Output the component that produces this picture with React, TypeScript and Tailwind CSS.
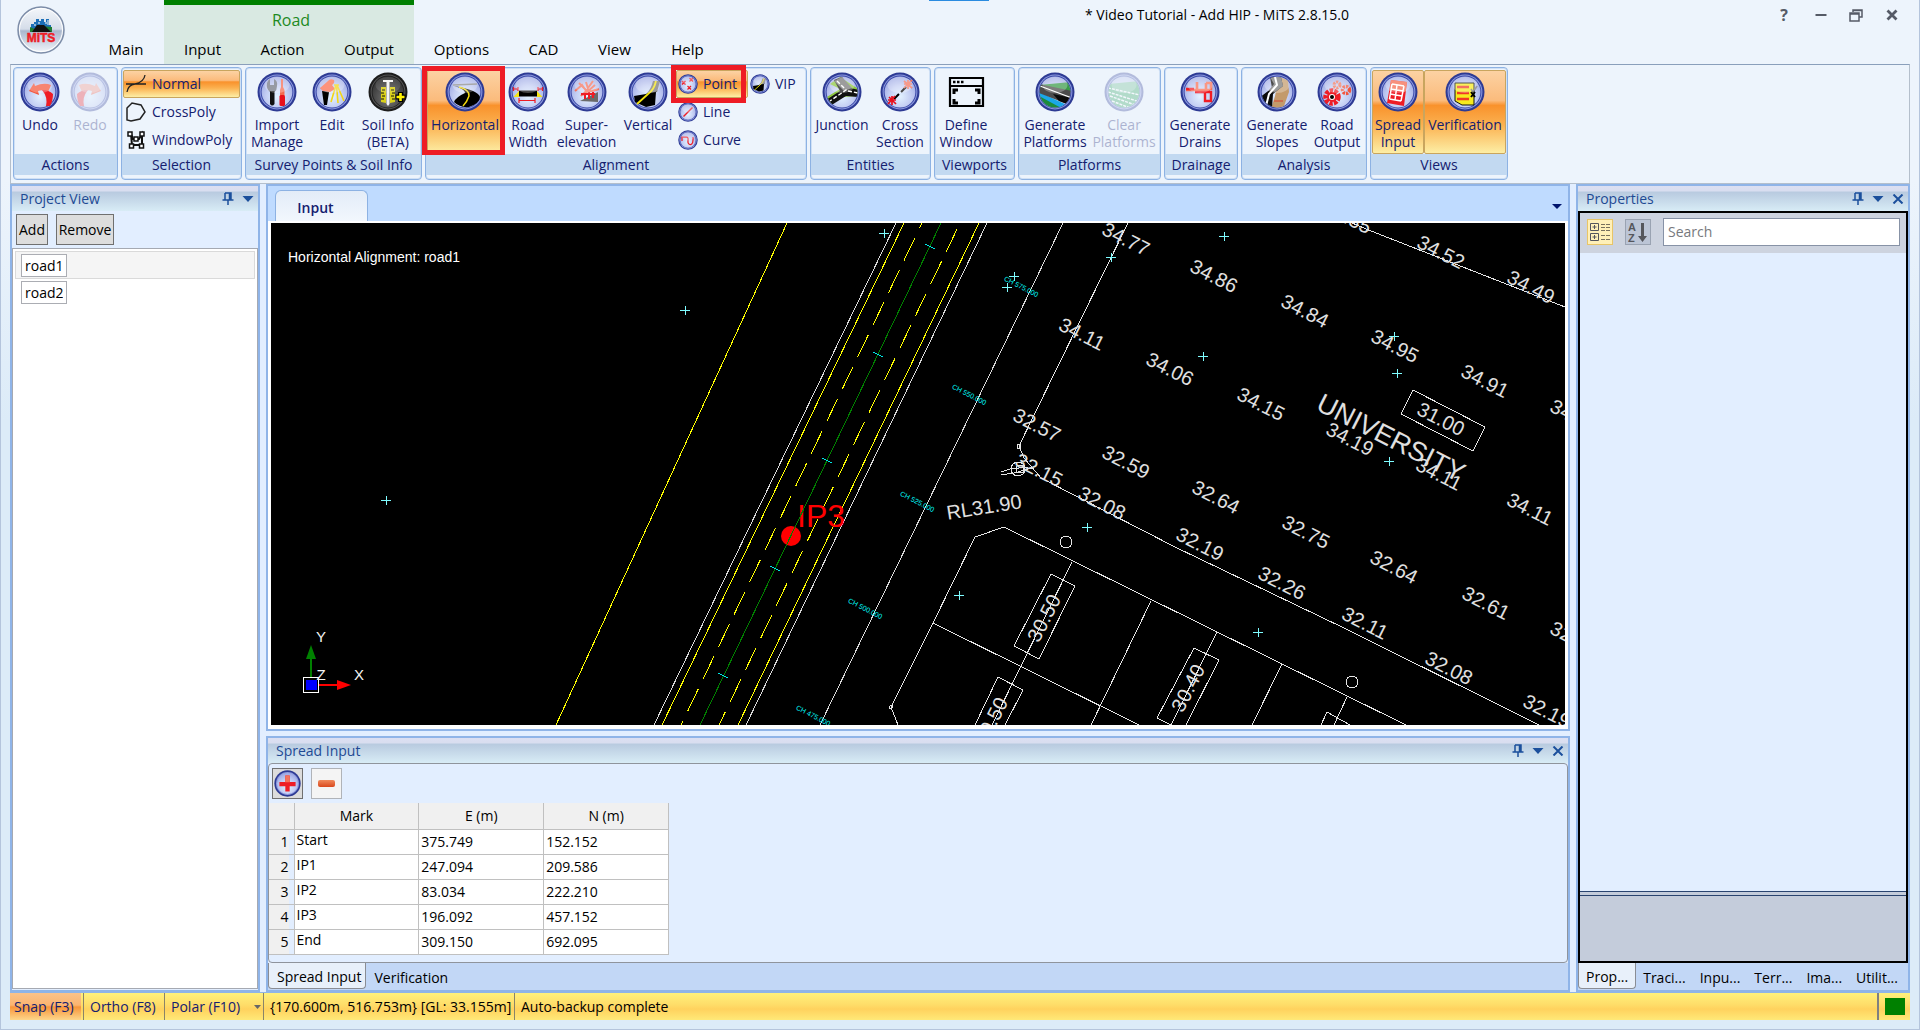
import { useState } from 'react'
import type { ReactNode } from 'react'
import clsx from 'clsx'

/* ---------- ribbon icons ---------- */

function Orb({ children, size = 40, dark = false }: { children?: ReactNode; size?: number; dark?: boolean }) {
  return (
    <svg width={size} height={size} viewBox="0 0 40 40" className="shrink-0" aria-hidden="true">
      <circle cx="20" cy="20" r="19.5" fill={dark ? '#1c1c1c' : '#2d3a94'} />
      <circle cx="20" cy="20" r="17.4" fill={dark ? '#555' : '#8e9be0'} />
      <circle cx="20" cy="20" r="16.4" fill={dark ? '#222' : '#3a48a6'} />
      <circle cx="20" cy="20" r="15.4" fill={dark ? 'url(#orbDark)' : 'url(#orbBlue)'} />
      {children}
      <ellipse cx="20" cy="13" rx="12.5" ry="8" fill="#fff" opacity={dark ? 0.12 : 0.28} />
    </svg>
  )
}

function IconDefs() {
  return (
    <svg width="0" height="0" className="absolute" aria-hidden="true">
      <defs>
        <radialGradient id="orbBlue" cx="50%" cy="65%" r="60%">
          <stop offset="0" stopColor="#e3f2ff" />
          <stop offset="0.6" stopColor="#c3cdf3" />
          <stop offset="1" stopColor="#a3aee6" />
        </radialGradient>
        <radialGradient id="orbDark" cx="50%" cy="70%" r="65%">
          <stop offset="0" stopColor="#777" />
          <stop offset="1" stopColor="#333" />
        </radialGradient>
        <linearGradient id="logoBg" x1="0" y1="0" x2="0" y2="1">
          <stop offset="0" stopColor="#f4f7fb" />
          <stop offset="0.48" stopColor="#d5dde9" />
          <stop offset="0.52" stopColor="#a9b7cd" />
          <stop offset="1" stopColor="#f2f6fb" />
        </linearGradient>
        <clipPath id="orbClip">
          <circle cx="20" cy="20" r="15.4" />
        </clipPath>
      </defs>
    </svg>
  )
}

const UndoIcon = () => (
  <Orb>
    <path d="M9 19 L14 11 L15 14 Q24 10 31 13 Q29 18 28 20 Q23 17 18 19 L19 23 Z" fill="#f4563c" />
    <path d="M22 18 Q29 18 33 22 Q33 29 30 34 L26 34 Q28 25 22 18 Z" fill="#ee1c25" />
  </Orb>
)
const RedoIcon = () => (
  <Orb>
    <path d="M31 19 L26 11 L25 14 Q16 10 9 13 Q11 18 12 20 Q17 17 22 19 L21 23 Z" fill="#f4563c" />
    <path d="M18 18 Q11 18 7 22 Q7 29 10 34 L14 34 Q12 25 18 18 Z" fill="#ee1c25" />
  </Orb>
)
const ImportIcon = () => (
  <Orb>
    <path d="M13 20 Q9 17 10 11 Q11 8 13 7 V13 H17 V7 Q21 9 20 14 Q20 18 17.5 20 Z" fill="#6f7480" />
    <path d="M13 19 H17.5 V32 Q15.200 35 13 32 Z" fill="#111" />
    <path d="M24 7 H26 V15 L27.500 18 V24 H23 V18 L24 15 Z" fill="#f46a50" />
    <rect x="22.500" y="23" width="5.500" height="11" rx="1.500" fill="#e8101c" />
  </Orb>
)
const EditIcon = () => (
  <Orb>
    <path d="M8 16 L16 9 Q18 6 22 8 Q23 11 20 13 L23 17 L18 20 L11 19 Z" fill="#fb6a4c" />
    <path d="M10 19 L17 20 L15 33 L12 33 Z" fill="#000" />
    <path d="M24 13 L19 30 M25 13 L32 29 M24.500 13 L26 31 M22 13 H27" stroke="#f2d516" strokeWidth="1.600" fill="none" />
  </Orb>
)
const SoilIcon = () => (
  <Orb dark>
    <path d="M13 15 H18 V31 L13 30 Z M22 15 H27 V30 L22 31 Z" fill="#d9cf1a" />
    <path d="M14 18 h3 M13 21 h3 M14 24 h3 M13 27 h3 M23 18 h3 M24 21 h3 M23 24 h3 M24 27 h3" stroke="#111" strokeWidth="1" />
    <path d="M15 8 H25 V10 H21.500 V32 L20 34 L18.500 32 V10 H15 Z" fill="#f4f4f4" />
    <path d="M32.500 20 V30 M27.500 25 H37.500" stroke="#000" strokeWidth="5" />
    <path d="M32.500 21 V29 M28.500 25 H36.500" stroke="#fff200" strokeWidth="2.600" />
  </Orb>
)
const HorizontalIcon = () => (
  <Orb>
    <path d="M9 14 Q20 17 20 21 Q11 25 9 30 Q15 36 24 35 Q35 31 35 25 Q33 18 9 14 Z" fill="#000" />
    <path d="M8 13 L32 12" stroke="#888" strokeWidth="1.500" />
    <path d="M14 15 Q25 18 24 24 Q22 30 18 34" stroke="#f3d90f" strokeWidth="1.500" fill="none" />
  </Orb>
)
const RoadWidthIcon = () => (
  <Orb>
    <path d="M11 18.500 H29 V24.500 H11 Z" fill="#000" />
    <path d="M5.500 25 L11 19 V25 Z M34.500 25 L29 19 V25 Z" fill="#f5e316" />
    <path d="M5.500 15 V19 M10 15 V19 M5.500 17 H10 M30 15 V19 M34.500 15 V19 M30 17 H34.500 M11 26 V31 M27 26 V31 M11 28.500 H27" stroke="#ee1c25" strokeWidth="1.200" fill="none" />
  </Orb>
)
const SuperIcon = () => (
  <Orb>
    <path d="M13 29 L31 20 V30 Z" fill="#6a6a6a" />
    <path d="M8 19 L15 13 L20 20 L28 13 M12 11 L19 18 M14 24 Q18 19 25 19 L32 17 M19 10 L22 20 M26 9 L16 23" stroke="#f4725c" strokeWidth="2" fill="none" />
    <path d="M18 21 V27 M22 20 V27 M26 20 V26 M14 22 H28" stroke="#ee1c25" strokeWidth="2" fill="none" />
  </Orb>
)
const VerticalIcon = ({ size = 40 }: { size?: number }) => (
  <Orb size={size}>
    <path d="M28 12 L31 9 L28 20 L27 33 L18 35 L7 30 L6 24 L18 22 Q25 18 28 12 Z" fill="#000" />
    <path d="M25 9 L32 9 L29 20 L19 21 Q23 17 25 9 Z" fill="#777" />
    <path d="M28 9 Q26 18 20 22 L9 32" stroke="#f3e30f" strokeWidth="1.800" fill="none" />
  </Orb>
)
const PointIcon = () => (
  <Orb size={20}>
    <path d="M8 14 l7 7 m0 -7 l-7 7 M23 8 l7 7 m0 -7 l-7 7 M19 24 l7 7 m0 -7 l-7 7" stroke="#ee1c25" strokeWidth="2.500" />
  </Orb>
)
const LineIcon = () => (
  <Orb size={20}>
    <path d="M11 29 L29 11" stroke="#ee1c25" strokeWidth="3" />
  </Orb>
)
const CurveIcon = () => (
  <Orb size={20}>
    <path d="M8 22 V14 H17 Q21 14 20 21 Q19 29 25 29 Q31 29 30 14" stroke="#ee1c25" strokeWidth="2.500" fill="none" />
  </Orb>
)
const JunctionIcon = () => (
  <Orb>
    <g clipPath="url(#orbClip)">
      <path d="M3 26 L18 17 L8 12 L18 5 L38 18 L36 24 L20 25 L5 36 Z" fill="#8cc63e" />
      <path d="M12 8 L20 5 L28 16 L37 18 L37 25 L24 24 L8 34 L4 28 L18 19 Z" fill="#111" />
      <path d="M12 9 L20 5 L30 16 L22 19 Z" fill="#777" />
      <path d="M15 9 L24 18 L8 29 M26 19 L36 21" stroke="#fff" strokeWidth="1.400" strokeDasharray="4 2" fill="none" />
    </g>
  </Orb>
)
const CrossSectionIcon = () => (
  <Orb>
    <path d="M14 27 L28 13" stroke="#000" strokeWidth="2" strokeDasharray="7 3" />
    <path d="M9 25 L16 32 M8 28 L16 28 M12 33 L12 24 M15 24 L8 32" stroke="#e8101c" strokeWidth="1.700" />
    <path d="M24 9 L32 16 M24 12 L32 12 M28 17 L28 8 M32 8 L24 16" stroke="#f4725c" strokeWidth="1.700" />
  </Orb>
)
const WindowIcon = () => (
  <svg width="40" height="40" viewBox="0 0 40 40" aria-hidden="true">
    <path d="M4 6 H37 V34 H4 Z M4 14 H37" fill="none" stroke="#000" strokeWidth="2.200" />
    <path d="M7 10 h2.500 M11 10 h2.500 M15 10 h2.500" stroke="#000" strokeWidth="2.500" />
    <path d="M8 22 V18 H12 M29 18 H33 V22 M8 27 V31 H12 M29 31 H33 V27" fill="none" stroke="#000" strokeWidth="3" />
  </svg>
)
const PlatformsIcon = () => (
  <Orb>
    <g clipPath="url(#orbClip)">
      <path d="M4 13 L36 10 V20 L4 16 Z" fill="#3a9a48" />
      <path d="M4 22 L30 37 H4 Z" fill="#1d8a3c" />
      <path d="M4 20 L34 34 L30 38 L4 24 Z" fill="#1aa7e8" />
      <path d="M4 12 L37 19 V34 L4 21 Z" fill="#4b4b4b" />
      <path d="M18 22 L37 26 V34 L24 29 Z" fill="#0a0a0a" />
      <path d="M5 14 L37 26" stroke="#fff" strokeWidth="1.300" />
    </g>
  </Orb>
)
const ClearIcon = () => (
  <Orb>
    <g clipPath="url(#orbClip)">
      <path d="M4 12 L36 9 V37 H4 Z" fill="#2da35a" />
      <path d="M4 16 L36 23 M4 20 L36 30 M6 24 L34 34 M8 29 L26 36" stroke="#fff" strokeWidth="1.500" strokeDasharray="3 1" />
    </g>
  </Orb>
)
const DrainsIcon = () => (
  <Orb>
    <path d="M6 18 H30 M17 10 V18 M26 11 H31 V18 M26 18 V11" stroke="#f86f55" strokeWidth="2.600" fill="none" />
    <path d="M15 20 H31 V29 H25 V20 M6 17 H14" stroke="#f01c25" strokeWidth="2.400" fill="none" />
  </Orb>
)
const SlopesIcon = () => (
  <Orb>
    <g clipPath="url(#orbClip)">
      <path d="M22 5 L31 8 L32 20 L26 37 H14 L18 24 Z" fill="#c39a6b" />
      <path d="M13 5 H24 L26 14 L16 22 L15 36 H2 V26 L15 16 Z" fill="#0a0a0a" />
      <path d="M13 5 H24 L26 14 L18 20 L12 18 L17 12 Z" fill="#777" />
      <path d="M18 5 L20 13 L12 22 L9 34" stroke="#fff" strokeWidth="2" fill="none" />
      <path d="M17 29 H26" stroke="#d84030" strokeWidth="1" />
    </g>
  </Orb>
)
const GearsIcon = () => (
  <Orb>
    <circle cx="15" cy="25" r="6.500" fill="none" stroke="#ee1c25" strokeWidth="4.500" strokeDasharray="3.400 1.200" />
    <circle cx="15" cy="25" r="4" fill="#fff" stroke="#ee1c25" strokeWidth="2" />
    <circle cx="15" cy="25" r="2" fill="#000" />
    <circle cx="29" cy="18" r="3.500" fill="none" stroke="#f2553c" strokeWidth="3.500" strokeDasharray="2.200 1" />
    <circle cx="20" cy="13" r="3" fill="none" stroke="#f2765c" strokeWidth="3" strokeDasharray="2.200 1" />
  </Orb>
)
const SpreadIcon = () => (
  <Orb>
    <path d="M13 8 L29 10 L26 34 L9 31 Z" fill="#ee1c25" />
    <path d="M13 8 L29 10 L27.500 20 L11.500 18 Z" fill="#f4674c" />
    <path d="M14 12 L26 14 M13 17 L25 19 M12 22 L24 24 M11.500 27 L23 29 M14 12 L11.500 27 M19 13 L17 28 M26 14 L23 29" stroke="#fff" strokeWidth="1.500" fill="none" />
  </Orb>
)
const VerifyIcon = () => (
  <Orb>
    <path d="M10 11 H29 V33 H17 L10 29 Z" fill="#f7ea1e" stroke="#111" strokeWidth="1" />
    <path d="M12 15 H24 M12 21 H24 M12 27 H24" stroke="#f03a22" strokeWidth="2.600" />
    <path d="M26 17 L28 20 L32 14" stroke="#777" strokeWidth="1.500" fill="none" />
    <path d="M26 20 L30 25 M30 20 L26 25" stroke="#000" strokeWidth="2" />
  </Orb>
)

function Logo() {
  return (
    <svg width="48" height="48" viewBox="0 0 48 48" aria-hidden="true">
      <circle cx="24" cy="24" r="23" fill="url(#logoBg)" stroke="#7d8da8" strokeWidth="1.500" />
      <circle cx="24" cy="24" r="21.500" fill="none" stroke="#fff" strokeWidth="1" />
      <path d="M14 18 h3 v-2 h2 v-3 h3 v2 h2 v-2 h3 v3 h2 v-3 h3 v6 h2 v4 H14 Z" fill="#1c6fb8" />
      <path d="M17 19 h2 M21 17 h2 M28 17 h2 M31 14 v5" stroke="#fff" strokeWidth="1" />
      <path d="M13 21 L18 23 L23 20 L35 21 V26 H13 Z" fill="#1d7c35" />
      <path d="M20 19 L27 19 L34 26 H15 Z" fill="#111" />
      <text x="24" y="36" textAnchor="middle" fontSize="12" fontWeight="700" fill="#ee1c25" stroke="#ee1c25" strokeWidth="0.500" className="font-['Liberation_Sans',sans-serif]">MiTS</text>
    </svg>
  )
}

/* ---------- ribbon ---------- */

const hot = 'border border-[#c9a55e] bg-[linear-gradient(#fcd2a3_0%,#fbbb7c_36%,#f9922c_42%,#fbb04f_65%,#fdeea5_100%)]'

function BigButton({ icon, label, width, active, disabled }: { icon: ReactNode; label: string; width: string; active?: boolean; disabled?: boolean }) {
  return (
    <button
      type="button"
      disabled={disabled}
      className={clsx('flex h-[84px] shrink-0 flex-col items-center rounded-xs text-center leading-[17px] whitespace-pre', width, active ? hot + ' pt-px' : 'pt-0.5', disabled && 'opacity-30')}
    >
      {icon}
      <span className="mt-1">{label}</span>
    </button>
  )
}

function SmallButton({ icon, label, active, width }: { icon: ReactNode; label: string; active?: boolean; width?: string }) {
  return (
    <button type="button" className={clsx('flex h-7 items-center gap-[5px] rounded-xs text-left', width, active ? hot + ' pl-px' : 'pl-0.5')}>
      {icon}
      <span>{label}</span>
    </button>
  )
}

function Group({ title, width, children }: { title: string; width: string; children: ReactNode }) {
  return (
    <section aria-label={title} className={clsx('flex h-[113px] shrink-0 flex-col rounded-sm border border-[#8db2e3] shadow-[inset_0_0_0_1px_#cfe0f5]', width)}>
      <div className="relative flex h-[86px] px-px pt-0.5">{children}</div>
      <h2 className="h-[21px] bg-[#c2d9f1] text-center leading-[21px] whitespace-nowrap">{title}</h2>
    </section>
  )
}

function Ribbon() {
  return (
    <div className="mx-[9px] flex h-[120px] shrink-0 items-start gap-[3px] overflow-hidden border border-[#b4bfcc] border-t-[#8a9fbb] bg-[#edf4fc] pt-0.5 pl-0.5 text-[#14206f]">
      <Group title="Actions" width="w-[105px]">
        <BigButton icon={<UndoIcon />} label="Undo" width="w-[50px]" />
        <BigButton icon={<RedoIcon />} label="Redo" width="w-[50px]" disabled />
      </Group>
      <Group title="Selection" width="w-[121px]">
        <div className="flex w-full flex-col">
          <SmallButton active label="Normal" icon={
            <svg width="22" height="20" viewBox="0 0 22 20" aria-hidden="true"><path d="M2 18 Q3 11 10 10 Q19 8 20 1 M1 10 H21" fill="none" stroke="#222" strokeWidth="1.300" /></svg>
          } />
          <SmallButton label="CrossPoly" icon={
            <svg width="22" height="20" viewBox="0 0 22 20" aria-hidden="true"><path d="M2 18 V6 L7 1 L16 3 L20 10 L15 17 L6 19 Z" fill="none" stroke="#222" strokeWidth="1.500" /></svg>
          } />
          <SmallButton label="WindowPoly" icon={
            <svg width="22" height="20" viewBox="0 0 22 20" aria-hidden="true">
              <path d="M6 4 L8 9 L14 9 L17 4 L17 15 H7 Z" fill="none" stroke="#111" strokeWidth="2" />
              <path d="M3 2 h4 v4 h-4 z M15 2 h4 v4 h-4 z M9 7 h4 v4 h-4 z M4.500 14 h4 v4 h-4 z M14.500 14 h4 v4 h-4 z" fill="#fff" stroke="#111" strokeWidth="1.500" />
            </svg>
          } />
        </div>
      </Group>
      <Group title="Survey Points & Soil Info" width="w-[177px]">
        <BigButton icon={<ImportIcon />} label={'Import\nManage'} width="w-[60px]" />
        <BigButton icon={<EditIcon />} label="Edit" width="w-[50px]" />
        <BigButton icon={<SoilIcon />} label={'Soil Info\n(BETA)'} width="w-[62px]" />
      </Group>
      <Group title="Alignment" width="w-[382px]">
        <BigButton icon={<HorizontalIcon />} label="Horizontal" width="w-[76px]" active />
        <BigButton icon={<RoadWidthIcon />} label={'Road\nWidth'} width="w-[50px]" />
        <BigButton icon={<SuperIcon />} label={'Super-\nelevation'} width="w-[67px]" />
        <BigButton icon={<VerticalIcon />} label="Vertical" width="w-14" />
        <div className="flex flex-col">
          <SmallButton icon={<PointIcon />} label="Point" active width="w-[72px]" />
          <SmallButton icon={<LineIcon />} label="Line" />
          <SmallButton icon={<CurveIcon />} label="Curve" />
        </div>
        <div>
          <SmallButton icon={<VerticalIcon size={20} />} label="VIP" />
        </div>
        <div className="pointer-events-none absolute -top-0.5 -left-1 h-[89px] w-[83px] border-[5px] border-[#ee1c25]" />
        <div className="pointer-events-none absolute -top-[3px] left-[245px] h-[38px] w-[75px] border-[5px] border-[#ee1c25]" />
      </Group>
      <Group title="Entities" width="w-[121px]">
        <BigButton icon={<JunctionIcon />} label="Junction" width="w-[60px]" />
        <BigButton icon={<CrossSectionIcon />} label={'Cross\nSection'} width="w-[56px]" />
      </Group>
      <Group title="Viewports" width="w-[81px]">
        <BigButton icon={<WindowIcon />} label={'Define\nWindow'} width="w-[60px]" />
      </Group>
      <Group title="Platforms" width="w-[143px]">
        <BigButton icon={<PlatformsIcon />} label={'Generate\nPlatforms'} width="w-[70px]" />
        <BigButton icon={<ClearIcon />} label={'Clear\nPlatforms'} width="w-[68px]" disabled />
      </Group>
      <Group title="Drainage" width="w-[74px]">
        <BigButton icon={<DrainsIcon />} label={'Generate\nDrains'} width="w-[68px]" />
      </Group>
      <Group title="Analysis" width="w-[126px]">
        <BigButton icon={<SlopesIcon />} label={'Generate\nSlopes'} width="w-[68px]" />
        <BigButton icon={<GearsIcon />} label={'Road\nOutput'} width="w-[52px]" />
      </Group>
      <Group title="Views" width="w-[138px]">
        <BigButton icon={<SpreadIcon />} label={'Spread\nInput'} width="w-[52px]" active />
        <BigButton icon={<VerifyIcon />} label="Verification" width="w-[82px]" active />
      </Group>
    </div>
  )
}

/* ---------- title bar ---------- */

const tabs = [
  { name: 'Main', width: 'w-[76px]', road: false },
  { name: 'Input', width: 'w-[77px]', road: true },
  { name: 'Action', width: 'w-[83px]', road: true },
  { name: 'Output', width: 'w-[90px]', road: true },
  { name: 'Options', width: 'w-[95px]', road: false },
  { name: 'CAD', width: 'w-[69px]', road: false },
  { name: 'View', width: 'w-[73px]', road: false },
  { name: 'Help', width: 'w-[73px]', road: false },
]

function Tab({ name, width }: { name: string; width: string }) {
  return <button type="button" className={clsx('h-7 pb-0.5 text-center text-black', width)}>{name}</button>
}

function TitleBar() {
  return (
    <header className="relative flex h-16 shrink-0 text-[15px]">
      <div className="w-[87px] pt-1.5 pl-4"><Logo /></div>
      <nav className="flex items-end" aria-label="Ribbon tabs">
        <Tab name="Main" width="w-[76px]" />
        <div className="flex h-16 flex-col justify-between border-t-[5px] border-[#008000] bg-[#d9e9e2]">
          <div className="pt-[5px] pl-1 text-center text-[16px] text-[#1e8a1e]">Road</div>
          <div className="flex">
            {tabs.filter((t) => t.road).map((t) => <Tab key={t.name} name={t.name} width={t.width} />)}
          </div>
        </div>
        {tabs.slice(4).map((t) => <Tab key={t.name} name={t.name} width={t.width} />)}
      </nav>
      <div className="flex h-[30px] flex-1 items-center justify-between pr-[11px] pl-[361px]">
        <h1 className="text-[14px] whitespace-nowrap text-black">* Video Tutorial - Add HIP - MiTS 2.8.15.0</h1>
        <div className="flex text-[#555a66]">
          <button type="button" aria-label="Help" className="flex w-9 items-center justify-center text-[16px] font-bold">?</button>
          <button type="button" aria-label="Minimize" className="flex w-[38px] items-center justify-center">
            <svg width="12" height="12" viewBox="0 0 12 12"><path d="M0.500 6 H11.500" stroke="#555a66" strokeWidth="2" /></svg>
          </button>
          <button type="button" aria-label="Restore" className="flex w-8 items-center justify-center">
            <svg width="14" height="14" viewBox="0 0 14 14"><path d="M4 4 V2 H13 V9 H10 M1 5 H10 V13 H1 Z M1 6 H10 M4 2.500 H13" fill="none" stroke="#555a66" strokeWidth="1.500" /></svg>
          </button>
          <button type="button" aria-label="Close" className="flex w-9 items-center justify-center pl-1">
            <svg width="12" height="12" viewBox="0 0 12 12"><path d="M1.500 1.500 L10.500 10.500 M10.500 1.500 L1.500 10.500" stroke="#555a66" strokeWidth="2.800" /></svg>
          </button>
        </div>
      </div>
      <div className="absolute top-0 left-[928px] h-px w-[60px] bg-[#2a8be0]" />
    </header>
  )
}

/* ---------- docked panels ---------- */

function DockHeader({ title, closable }: { title: string; closable?: boolean }) {
  return (
    <div className="flex h-[25px] shrink-0 items-center justify-between bg-[linear-gradient(#dcdff2_0%,#d9def0_18%,#b9cbe0_26%,#d8ecf6_100%)] pr-1 pl-2">
      <h2 className="text-[#1e4a94]">{title}</h2>
      <div className="flex items-center gap-2">
        <button type="button" aria-label="Pin">
          <svg width="12" height="14" viewBox="0 0 12 14"><path d="M3 1 H9 V8 M3 1 V8 M7.500 1 V8 M0.500 8 H11.500 M6 8 V13" fill="none" stroke="#1b4f9c" strokeWidth="1.500" /></svg>
        </button>
        <button type="button" aria-label="Panel menu">
          <svg width="12" height="6" viewBox="0 0 12 6"><path d="M0.500 0 H11.500 L6 6 Z" fill="#1b4f9c" /></svg>
        </button>
        {closable && (
          <button type="button" aria-label="Close panel">
            <svg width="12" height="10" viewBox="0 0 12 10"><path d="M1.500 0.500 L10.500 9.500 M10.500 0.500 L1.500 9.500" stroke="#1b4f9c" strokeWidth="2" /></svg>
          </button>
        )}
      </div>
    </div>
  )
}

function DockTabs({ items, padding }: { items: string[]; padding: string }) {
  const [current, setCurrent] = useState(0)
  return (
    <div className="flex h-[27px] shrink-0 bg-[#c2d7f6]">
      {items.map((item, i) => (
        <button
          key={item}
          type="button"
          onClick={() => setCurrent(i)}
          className={clsx('h-[26px] shrink-0 pt-[3px] text-black', padding, i === current && 'rounded-b-sm border border-t-0 border-[#8a8d94] bg-[#e8f0fa]')}
        >
          {item}
        </button>
      ))}
    </div>
  )
}

function ProjectView() {
  return (
    <aside className="flex w-[250px] shrink-0 flex-col border-2 border-[#8fb4e8] bg-[#e2eeff]">
      <DockHeader title="Project View" />
      <div className="flex gap-2 px-1 py-[3px]">
        <button type="button" className="h-[31px] w-8 border border-[#707070] bg-[#dddddd] text-black">Add</button>
        <button type="button" className="h-[31px] w-[58px] border border-[#707070] bg-[#dddddd] text-black">Remove</button>
      </div>
      <ul className="mb-px flex-1 border border-[#a5a9b2] bg-white p-0.5 text-black">
        <li className="flex h-7 items-center border border-[#dadada] bg-[#f5f5f5] px-[5px]">
          <input aria-label="First road" defaultValue="road1" className="h-[23px] w-[46px] border border-[#abadb3] bg-white px-[3px]" />
        </li>
        <li className="flex h-[27px] items-center px-1.5">
          <input aria-label="Second road" defaultValue="road2" className="h-[23px] w-[46px] border border-[#abadb3] bg-white px-[3px]" />
        </li>
      </ul>
    </aside>
  )
}

/* ---------- drawing ---------- */

const levels: [string, number, number][] = [
  ['34.77', 1126, 239], ['34.86', 1214, 276], ['34.84', 1305, 311], ['34.11', 1082, 334],
  ['34.06', 1170, 369], ['34.15', 1261, 404], ['34.95', 1395, 346], ['34.91', 1485, 381],
  ['34.52', 1441, 252], ['34.49', 1531, 287], ['34.35', 1348, 217], ['34.88', 1574, 416],
  ['31.00', 1441, 419], ['34.19', 1350, 439], ['32.57', 1037, 425], ['32.15', 1039, 470],
  ['32.59', 1126, 462], ['34.11', 1439, 474], ['32.08', 1102, 503], ['32.64', 1216, 497],
  ['32.75', 1306, 532], ['32.19', 1200, 544], ['34.11', 1530, 509], ['32.64', 1394, 567],
  ['32.26', 1282, 583], ['32.61', 1486, 603], ['32.11', 1365, 623], ['32.58', 1574, 638],
  ['32.08', 1449, 668], ['32.19', 1547, 711],
]

const lotLevels: [string, number, number][] = [
  ['30.50', 1044, 618], ['30.40', 1188, 688], ['30.50', 991, 721],
]

const chainages: [string, number, number][] = [
  ['CH 575.000', 1021, 287], ['CH 550.000', 969, 395], ['CH 525.000', 917, 502],
  ['CH 500.000', 865, 609], ['CH 475.000', 813, 716],
]

const surveyPoints = [
  [1224, 236], [1111, 257], [1014, 276], [1007, 287], [1394, 336], [1203, 356], [1397, 373],
  [1389, 461], [1087, 527], [959, 595], [1258, 632], [884, 233], [685, 310], [386, 500],
]

const ticks = [[930, 246], [878, 354], [827, 460], [775, 568], [723, 675]]

function Drawing() {
  return (
    <svg viewBox="271 223 1294 502" preserveAspectRatio="xMinYMin slice" className="block h-full w-full bg-black font-['Liberation_Sans',Arial,sans-serif]" role="img" aria-label="Horizontal alignment drawing">
      <g fill="none" strokeWidth="1" shapeRendering="crispEdges">
        <path stroke="#ffff00" d="M787 223 L556 725 M904 223 L662 725 M979 223 L738 725" />
        <path stroke="#ffff00" strokeDasharray="25 10.700" strokeDashoffset="19" d="M922 223 L681 725" />
        <path stroke="#ffff00" strokeDasharray="25 10.700" strokeDashoffset="29" d="M960 223 L719 725" />
        <path stroke="#d8d8d8" d="M896 223 L654 725 M987 223 L746 725 M1063 223 L820 725" />
        {/* boundary and street edge */}
        <path stroke="#e4e4e4" d="M1128 223 L1035 413 L1019 446 L1024 458 L1041 478 L1175 547 L1344 628 L1539 725 M1350 222 L1366 229 L1565 307" />
        <path stroke="#e4e4e4" d="M898 725 L891 707 L933 623 L975 537 L1004 527 L1406 725 M933 623 L1139 725" />
        <path stroke="#e4e4e4" d="M1072 562 L992 725 M1151 601 L1091 725 M1217 632 L1171 725 M1282 664 L1252 725 M1347 697 L1334 725" />
        <path stroke="#e4e4e4" d="M1051 574 L1075 586 L1039 659 L1014 646 Z M1194 648 L1219 660 L1186 725 M1194 648 L1157 718 L1171 725 M975 725 L998 677 L1023 690 L1005 725 M1321 725 L1327 712 L1350 725" />
        <path stroke="#e4e4e4" d="M1413 390 L1485 427 L1473 451 L1401 414 Z" />
        <circle cx="1066" cy="542" r="6" stroke="#e4e4e4" />
        <circle cx="1352" cy="682" r="6" stroke="#e4e4e4" />
        <circle cx="1018" cy="469" r="7" stroke="#e4e4e4" />
        <circle cx="1020" cy="469" r="4" stroke="#e4e4e4" />
        <circle cx="891" cy="707" r="1.500" stroke="#e4e4e4" />
        <path stroke="#e4e4e4" d="M1017 444 h3 v4 h-3 Z M1001 472 L1010 469 L1028 467 M1001 475 L1014 473 L1032 468" />
        <g stroke="#7ffcff">
          {surveyPoints.map(([x, y]) => <path key={x} d={`M${x - 5} ${y + 0.5} H${x + 5} M${x + 0.5} ${y - 4} V${y + 5}`} />)}
        </g>
      </g>
      <g fill="#e0e0e0" fontSize="20" textAnchor="middle">
        {levels.map(([t, x, y], i) => <text key={i} transform={`translate(${x} ${y}) rotate(27)`} y="7">{t}</text>)}
        {lotLevels.map(([t, x, y], i) => <text key={i} transform={`translate(${x} ${y}) rotate(-63)`} y="7">{t}</text>)}
        <text transform="translate(1391 438) rotate(27)" y="9" fontSize="27">UNIVERSITY</text>
        <text transform="translate(984 507) rotate(-9)" y="7">RL31.90</text>
      </g>
      <g fill="#00ffff" fontSize="7" textAnchor="middle">
        {chainages.map(([t, x, y]) => <text key={t} transform={`translate(${x} ${y}) rotate(27)`} y="2">{t}</text>)}
      </g>
      <text x="797" y="527" fontSize="32" fill="#ff0000">IP3</text>
      <circle cx="791" cy="536" r="10" fill="#ff0000" />
      <g fill="none" strokeWidth="1" shapeRendering="crispEdges">
        <path stroke="#008000" d="M941 223 L700 725" />
        <g stroke="#00e5e5">
          {ticks.map(([x, y]) => <path key={x} d={`M${x - 5} ${y - 2} L${x + 5} ${y + 3}`} />)}
        </g>
      </g>
      {/* axis marker */}
      <path d="M311 680 V656" stroke="#008000" strokeWidth="2" />
      <path d="M306 659 L311 645 L316 659 Z" fill="#008000" />
      <path d="M318 685 H340" stroke="#ff0000" strokeWidth="2" />
      <path d="M337 680 L351 685 L337 690 Z" fill="#ff0000" />
      <rect x="303.500" y="677.500" width="15" height="15" fill="#000" stroke="#fff" />
      <rect x="306" y="680" width="11" height="10" fill="#0000ff" />
      <g fill="#f4f4f4" fontSize="15" textAnchor="middle">
        <text x="321" y="642">Y</text>
        <text x="359" y="680">X</text>
        <text x="321" y="680">Z</text>
      </g>
      <text x="288" y="262" fontSize="14" fill="#fff">Horizontal Alignment: road1</text>
    </svg>
  )
}

function DrawingPanel() {
  return (
    <section className="flex min-h-0 flex-1 flex-col border-2 border-[#8fb4e8] bg-[#bfdbff]">
      <div className="flex h-[35px] shrink-0 items-end justify-between pr-1.5 pl-[7px]">
        <button type="button" className="h-[31px] w-[93px] rounded-t-md border border-b-0 border-[#8db2e3] bg-[linear-gradient(#e3ecf8,#f2f7fd)] pt-1 pr-3 font-semibold text-[#14206f]">Input</button>
        <button type="button" aria-label="Open documents" className="pb-3">
          <svg width="10" height="5" viewBox="0 0 10 5"><path d="M0 0 H10 L5 5 Z" fill="#00156e" /></svg>
        </button>
      </div>
      <div className="min-h-0 flex-1 border-[3px] border-t-2 border-b-4 border-white">
        <Drawing />
      </div>
    </section>
  )
}

/* ---------- spread input ---------- */

const rows = [
  ['Start', '375.749', '152.152'],
  ['IP1', '247.094', '209.586'],
  ['IP2', '83.034', '222.210'],
  ['IP3', '196.092', '457.152'],
  ['End', '309.150', '692.095'],
]

function SpreadInput() {
  return (
    <section className="flex h-64 shrink-0 flex-col border-2 border-[#8fb4e8] bg-[#e2eeff]">
      <DockHeader title="Spread Input" closable />
      <div className="min-h-0 flex-1 overflow-hidden rounded-sm border border-[#8f949c]">
        <div className="flex gap-2 px-[3px] pt-1">
          <button type="button" aria-label="Add row" className="flex size-[31px] items-center justify-center border border-[#707070] bg-[#dcdcdc]">
            <svg width="27" height="27" viewBox="0 0 40 40">
              <circle cx="20" cy="20" r="19.500" fill="#2d3a94" />
              <circle cx="20" cy="20" r="17" fill="#8e9be0" />
              <circle cx="20" cy="20" r="15.500" fill="url(#orbBlue)" />
              <path d="M20 8 V32 M8 21 H32" stroke="#ee1c25" strokeWidth="6.500" />
              <path d="M20 8 V18" stroke="#f4725c" strokeWidth="6.500" />
            </svg>
          </button>
          <button type="button" aria-label="Remove row" className="flex size-[31px] items-center justify-center border border-[#b0b3b8] bg-[#f4f4f4]">
            <span className="h-[7px] w-[17px] rounded-xs bg-[linear-gradient(#f08a5c,#d9481c)]" />
          </button>
        </div>
        <table className="mt-1 w-[400px] table-fixed border-collapse text-black">
          <thead>
            <tr className="h-[26px] bg-[#f0f0f0]">
              <th className="w-[25px] border-r border-b border-[#c0c0c0]" aria-label="Row" />
              {['Mark', 'E (m)', 'N (m)'].map((h) => <th key={h} scope="col" className="border-r border-b border-[#c0c0c0] p-0 font-normal">{h}</th>)}
            </tr>
          </thead>
          <tbody>
            {rows.map((r, i) => (
              <tr key={r[0]} className="h-[25px] bg-white leading-[20px]">
                <th scope="row" className="border-r border-b border-[#c0c0c0] bg-[linear-gradient(to_right,#f0f0f0_20px,#e2eeff_20px)] p-0 pr-[5px] text-right font-normal">{i + 1}</th>
                <td className="border-r border-b border-[#c0c0c0] p-0 pl-0.5 align-top">{r[0]}</td>
                <td className="border-r border-b border-[#c0c0c0] p-0 pl-0.5">{r[1]}</td>
                <td className="border-r border-b border-[#c0c0c0] p-0 pl-0.5">{r[2]}</td>
              </tr>
            ))}
          </tbody>
        </table>
      </div>
      <DockTabs items={['Spread Input', 'Verification']} padding="pr-1 pl-2" />
    </section>
  )
}

/* ---------- properties ---------- */

function Properties() {
  return (
    <aside className="flex w-[334px] shrink-0 flex-col border-2 border-[#8fb4e8] bg-[#e2eeff]">
      <DockHeader title="Properties" closable />
      <div className="flex min-h-0 flex-1 flex-col border-2 border-black border-t-black">
        <div className="flex h-10 shrink-0 items-center gap-3 bg-[#cdd3df] pr-1.5 pb-[3px] pl-[7px]">
          <button type="button" aria-label="Categorized" className="flex size-[26px] items-center justify-center border border-[#e8c567] bg-[#fff0b8]">
            <svg width="20" height="20" viewBox="0 0 20 20"><path d="M0.500 1.500 h8 v7 h-8 z M0.500 11.500 h8 v7 h-8 z M2.500 5 h4 M4.500 3 v4 M2.500 15 h4 M4.500 13 v4" fill="none" stroke="#55565c" /><path d="M11 2.500 h4 M16 2.500 h4 M11 5.500 h4 M16 5.500 h4 M11 8.500 h4 M16 8.500 h4 M11 13.500 h4 M16 13.500 h4 M11 17.500 h4 M16 17.500 h4" stroke="#77705c" /></svg>
          </button>
          <button type="button" aria-label="Alphabetical" className="flex size-[26px] items-center justify-center border border-[#9aa3b2] bg-[#bcc5d6]">
            <svg width="20" height="22" viewBox="0 0 20 22" fill="#55565c" className="font-['Liberation_Sans',sans-serif]">
              <text x="0" y="10" fontSize="11" fontWeight="700">A</text>
              <text x="0" y="21" fontSize="11" fontWeight="700">Z</text>
              <path d="M13 2 H16 V15 H19 L14.500 21 L10 15 H13 Z" />
            </svg>
          </button>
          <input type="search" aria-label="Search properties" placeholder="Search" className="h-7 min-w-0 flex-1 border border-[#8792a6] bg-white px-1 text-black placeholder:text-[#77797d]" />
        </div>
        <div className="flex-1" />
        <div className="h-[5px] shrink-0 border-y border-[#2a4470] bg-[#c4ccdb]" />
        <div className="h-[65px] shrink-0 bg-[#c4ccdb]" />
      </div>
      <DockTabs items={['Prop...', 'Traci...', 'Inpu...', 'Terr...', 'Ima...', 'Utilit...']} padding="px-[7px]" />
    </aside>
  )
}

/* ---------- status bar ---------- */

function StatusBar() {
  const sep = 'border-r border-[#8a8468]'
  return (
    <footer className="mx-[9px] flex h-7 shrink-0 items-stretch border-t border-[#8fb4e8] bg-[linear-gradient(#fff17c_0%,#fedc68_45%,#ffd25e_60%,#ffe978_100%)] whitespace-nowrap text-black">
      <div className={clsx('w-[74px] pr-0.5', sep)}>
        <button type="button" className="h-full w-full bg-[linear-gradient(#fcc38a_0%,#fbb470_45%,#f8953a_52%,#fdd68b_100%)] pl-1 text-left text-[#14206f]">Snap (F3)</button>
      </div>
      <button type="button" className={clsx('w-[81px] pl-1.5 text-left text-[#14206f]', sep)}>Ortho (F8)</button>
      <button type="button" className={clsx('flex w-[99px] items-center justify-between pr-0.5 pl-1.5 text-[#14206f]', sep)}>
        Polar (F10)
        <svg width="7" height="4" viewBox="0 0 7 4"><path d="M0 0 H7 L3.500 4 Z" fill="#666" /></svg>
      </button>
      <div className={clsx('flex w-[251px] items-center pl-1.5', sep)}>&#123;170.600m, 516.753m&#125; [GL: 33.155m]</div>
      <div className="flex items-center pl-1.5">Auto-backup complete</div>
      <div className="ml-auto flex items-center border-l-2 border-[#808080] pr-[5px] pl-1.5">
        <div className="h-[17px] w-5 bg-[#008000]" />
      </div>
    </footer>
  )
}

export default function App() {
  return (
    <div className="flex h-screen flex-col overflow-hidden border-x border-b border-[#b4c4dc] bg-[linear-gradient(#edf4fc_0px,#edf4fc_180px,#dcebf8_420px)] font-['Open_Sans','Noto_Sans',sans-serif] text-[14px] leading-[20px]">
      <IconDefs />
      <TitleBar />
      <Ribbon />
      <main className="mx-[9px] flex min-h-0 flex-1 gap-1.5 bg-[#e2eeff]">
        <ProjectView />
        <div className="flex min-w-0 flex-1 flex-col gap-[5px]">
          <DrawingPanel />
          <SpreadInput />
        </div>
        <Properties />
      </main>
      <StatusBar />
      <div className="h-[9px] shrink-0" />
    </div>
  )
}
